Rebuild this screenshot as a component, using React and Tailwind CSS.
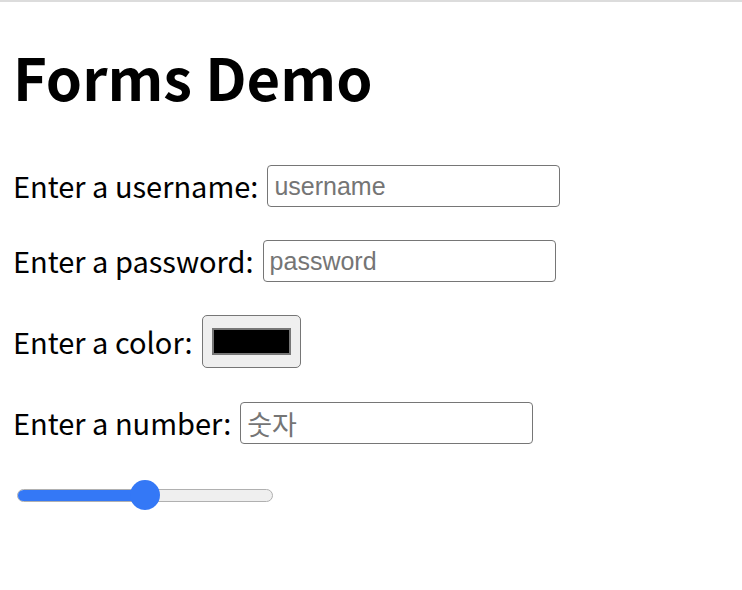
import React, { useState } from 'react';

const labelFont = { fontFamily: '"Noto Sans CJK KR", "Noto Sans", sans-serif' };
const inputFont = { fontFamily: '"Liberation Sans", Arial, "Noto Sans CJK KR", sans-serif' };

export default function App() {
    const [range, setRange] = useState(50);

    return (
        <div className="min-h-screen w-full bg-white border-t-2 border-[#dcdcdc] text-black" style={labelFont}>
            <div className="px-[13px]">
                <h1 className="text-[58px] font-bold leading-none pt-[45px] m-0">Forms Demo</h1>

                <div className="flex items-center mt-[60px] h-[42px]">
                    <span className="text-[29px]">Enter a username:</span>
                    <input
                        type="text"
                        placeholder="username"
                        className="ml-[9px] w-[293px] h-[42px] border-[1.5px] border-[#767676] rounded-[4px] px-[6px] text-[25px] placeholder:text-[#757575] outline-none"
                        style={inputFont}
                    />
                </div>

                <div className="flex items-center mt-[33px] h-[42px]">
                    <span className="text-[29px]">Enter a password:</span>
                    <input
                        type="password"
                        placeholder="password"
                        className="ml-[9px] w-[293px] h-[42px] border-[1.5px] border-[#767676] rounded-[4px] px-[6px] text-[25px] placeholder:text-[#757575] outline-none"
                        style={inputFont}
                    />
                </div>

                <div className="flex items-center mt-[33px] h-[53px]">
                    <span className="text-[29px]">Enter a color:</span>
                    <div className="ml-[9px] w-[99px] h-[53px] bg-[#efefef] border-[1.5px] border-[#767676] rounded-[5px] flex items-center justify-center">
                        <div className="w-[79px] h-[27px] bg-black border-2 border-[#777777]" />
                    </div>
                </div>

                <div className="flex items-center mt-[34px] h-[42px]">
                    <span className="text-[29px]">Enter a number:</span>
                    <input
                        type="text"
                        placeholder="숫자"
                        className="ml-[9px] w-[293px] h-[42px] border-[1.5px] border-[#767676] rounded-[4px] px-[6px] text-[27px] placeholder:text-[#757575] outline-none"
                        style={labelFont}
                    />
                </div>

                {/* range slider, drawn by hand so it looks like the reference */}
                <div className="relative mt-[36px] ml-[4px] w-[256px] h-[30px] flex items-center">
                    <div className="w-full h-[13px] rounded-full bg-[#efefef] border-[1.5px] border-[#b0b0b0] overflow-hidden">
                        <div className="h-full bg-[#3478f6]" style={{ width: `${range}%` }} />
                    </div>
                    <div
                        className="absolute top-0 w-[30px] h-[30px] rounded-full bg-[#3478f6]"
                        style={{ left: `calc(${range}% - 15px)` }}
                    />
                </div>
            </div>
        </div>
    );
}
